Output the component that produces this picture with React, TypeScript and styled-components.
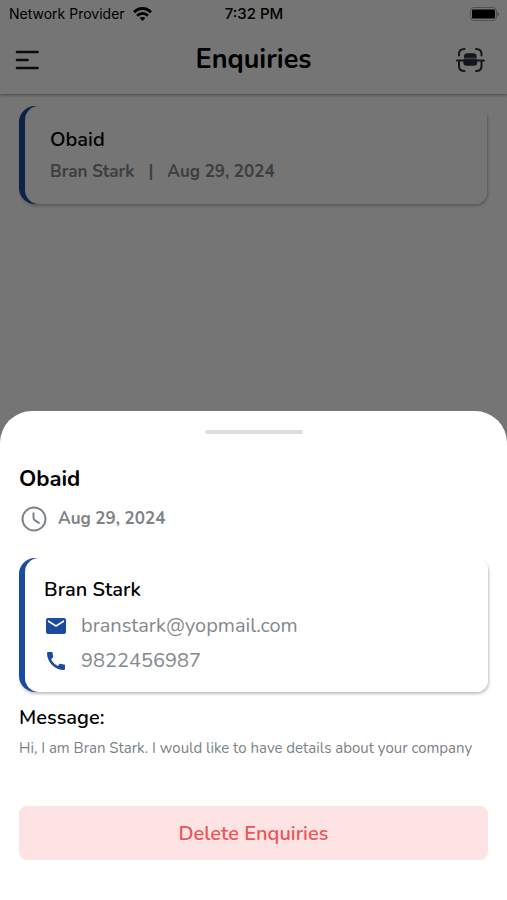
import React from "react";
import styled, { createGlobalStyle } from "styled-components";
import { MdCall, MdEmail } from "react-icons/md";

const GlobalStyle = createGlobalStyle`
  *, *::before, *::after { box-sizing: border-box; }
  body {
    margin: 0;
    background: #fff;
    color: #000;
    font-family: Nunito, Lato, "Open Sans", sans-serif;
  }
  h1, h2, h3, p { margin: 0; }
  button { border: 0; padding: 0; background: none; font: inherit; color: inherit; cursor: pointer; }
  svg { display: block; flex: none; }
`;

const Screen = styled.main`
  position: relative;
  min-height: 100vh;
`;

const TopArea = styled.div`
  padding-bottom: 12px;
`;

const AppHeader = styled.header`
  box-shadow: 0 1px 3px rgba(0, 0, 0, 0.4);
`;

const StatusBar = styled.div`
  display: grid;
  grid-template-columns: 1fr auto 1fr;
  align-items: center;
  height: 28px;
  padding: 0 8px 0 9px;
  font: 400 14px/20px Inter, sans-serif;
`;

const Carrier = styled.div`
  display: flex;
  align-items: center;
  gap: 8px;
`;

const Clock = styled.time`
  font-size: 15px;
  font-weight: 500;
`;

const Battery = styled.div`
  justify-self: end;
`;

const TitleBar = styled.div`
  display: grid;
  grid-template-columns: 1fr auto 1fr;
  align-items: center;
  height: 66px;
  padding: 0 14px 2px;
`;

const Title = styled.h1`
  font-size: 27px;
  line-height: 36px;
  font-weight: 700;
`;

const IconButton = styled.button<{ $end?: boolean }>`
  justify-self: ${({ $end }) => ($end ? "end" : "start")};
  margin-right: ${({ $end }) => ($end ? 8 : 0)}px;
`;

const Card = styled.article`
  padding-left: 6px;
  border-radius: 16px 12px 12px 16px;
  background: linear-gradient(to right, #1b4b9f 32px, #fff 32px);
  box-shadow: 1px 2px 3px rgba(0, 0, 0, 0.25);
`;

const CardBody = styled.div<{ $padding: string }>`
  display: flex;
  flex-direction: column;
  padding: ${({ $padding }) => $padding};
  border-radius: 14px 12px 12px 14px;
  background: #fff;
`;

const EnquiryList = styled.section`
  padding: 0 20px 0 19px;
`;

const Name = styled.h3`
  font-size: 20px;
  line-height: 28px;
  font-weight: 600;
`;

const Meta = styled.p`
  display: flex;
  gap: 14px;
  margin-top: 4px;
  color: #84898c;
  font-size: 17px;
  line-height: 28px;
  font-weight: 700;
`;

const Scrim = styled.div`
  position: absolute;
  inset: 0;
  display: flex;
  flex-direction: column;
  justify-content: flex-end;
  background: rgba(0, 0, 0, 0.54);
`;

const Sheet = styled.section`
  display: flex;
  flex-direction: column;
  padding: 19px 19px 40px;
  border-radius: 32px 32px 0 0;
  background: #fff;
`;

const Handle = styled.div`
  align-self: center;
  width: 98px;
  height: 4px;
  border-radius: 2px;
  background: #dedede;
`;

const SheetTitle = styled.h2`
  margin-top: 29px;
  font-size: 22px;
  line-height: 32px;
  font-weight: 700;
`;

const DateRow = styled.div`
  display: flex;
  align-items: center;
  gap: 11px;
  margin: 8px 0 23px;
  padding-left: 2px;
  color: #7f8488;
  font-size: 17px;
  line-height: 32px;
  font-weight: 700;
`;

const ContactList = styled.div`
  margin-top: 4px;
`;

const ContactRow = styled.a`
  display: flex;
  align-items: center;
  gap: 13px;
  height: 35px;
  color: #84898d;
  font-size: 20px;
  text-decoration: none;

  svg { color: #1b4b9f; }
`;

const MessageTitle = styled.h3`
  margin-top: 12px;
  font-size: 20px;
  line-height: 28px;
  font-weight: 600;
`;

const Message = styled.p`
  margin-top: 4px;
  color: #7c8286;
  font-size: 15px;
  line-height: 24px;
`;

const DeleteButton = styled.button`
  && {
    height: 54px;
    margin-top: 46px;
    border-radius: 8px;
    background: #fde3e3;
    color: #eb5656;
    font-size: 20px;
    font-weight: 600;
  }
`;

const WifiIcon = () => (
  <svg width="19" height="15" viewBox="0 0 19 15" fill="none" stroke="currentColor" strokeWidth="2.8">
    <path d="M1 5.3C5.8.2 13.2.2 18 5.3M4.1 8.7c3-3.2 7.8-3.2 10.8 0" />
    <path d="M9.5 14 6.7 11c1.6-1.5 4-1.5 5.6 0z" fill="currentColor" stroke="none" />
  </svg>
);

const BatteryIcon = () => (
  <svg width="30" height="15" viewBox="0 0 30 15">
    <rect x="1.5" y="0.5" width="26" height="13" rx="3.5" fill="none" stroke="#000" strokeOpacity="0.3" />
    <rect x="3" y="2.5" width="23" height="9" rx="1" />
    <path d="M28.5 5c2 .8 2 3.6 0 4.4z" fillOpacity="0.4" />
  </svg>
);

const MenuIcon = () => (
  <svg width="26" height="22" viewBox="0 0 26 22" fill="none" stroke="#16181c" strokeWidth="2.6" strokeLinecap="round">
    <path d="M3 3h20.5M3 11h10.5M3 19h20.5" />
  </svg>
);

const ScanIcon = () => (
  <svg width="29" height="26" viewBox="0 0 29 26" fill="none" stroke="#28303f" strokeWidth="2" strokeLinecap="round">
    <path d="M3 8.5V7q0-5 5.5-5M20 2q5.5 0 5.5 5v1.5M3 14v5q0 5 5.5 5M20 24q5.5 0 5.5-5v-5M1 13.5h27" />
    <path
      d="M8 10.8V9.5q0-3.3 3.3-3.3h6q3.3 0 3.3 3.3v1.3zM7.3 12.5h14v2.8q0 3.5-3.5 3.5h-7q-3.5 0-3.5-3.5z"
      fill="#28303f"
      stroke="none"
    />
    <path d="M8 10.8h12.6v2H8z" fill="#28303f" fillOpacity="0.6" stroke="none" />
  </svg>
);

const TimeIcon = () => (
  <svg width="26" height="26" viewBox="0 0 26 26" fill="none" stroke="currentColor" strokeWidth="2" strokeLinecap="round">
    <circle cx="13" cy="13" r="11.5" />
    <path d="M12.5 7.3v4.2q0 1.8 1.4 2.8l4 2.6" />
  </svg>
);

export default function App() {
  return (
    <Screen>
      <GlobalStyle />
      <TopArea>
        <AppHeader>
          <StatusBar>
            <Carrier>
              Network Provider
              <WifiIcon />
            </Carrier>
            <Clock>7:32 PM</Clock>
            <Battery>
              <BatteryIcon />
            </Battery>
          </StatusBar>
          <TitleBar>
            <IconButton aria-label="Menu">
              <MenuIcon />
            </IconButton>
            <Title>Enquiries</Title>
            <IconButton $end aria-label="Scan">
              <ScanIcon />
            </IconButton>
          </TitleBar>
        </AppHeader>
      </TopArea>
      <EnquiryList>
        <Card>
          <CardBody $padding="20px 25px 18px">
            <Name>Obaid</Name>
            <Meta>
              <span>Bran Stark</span>
              <span>|</span>
              <span>Aug 29, 2024</span>
            </Meta>
          </CardBody>
        </Card>
      </EnquiryList>
      <Scrim>
        <Sheet role="dialog" aria-labelledby="enquiry-title">
          <Handle />
          <SheetTitle id="enquiry-title">Obaid</SheetTitle>
          <DateRow>
            <TimeIcon />
            <time dateTime="2024-08-29">Aug 29, 2024</time>
          </DateRow>
          <Card>
            <CardBody $padding="18px 19px 14px">
              <Name>Bran Stark</Name>
              <ContactList>
                <ContactRow href="mailto:branstark@yopmail.com">
                  <MdEmail size={24} />
                  branstark@yopmail.com
                </ContactRow>
                <ContactRow href="tel:9822456987">
                  <MdCall size={24} />
                  9822456987
                </ContactRow>
              </ContactList>
            </CardBody>
          </Card>
          <MessageTitle>Message:</MessageTitle>
          <Message>Hi, I am Bran Stark. I would like to have details about your company</Message>
          <DeleteButton>Delete Enquiries</DeleteButton>
        </Sheet>
      </Scrim>
    </Screen>
  );
}
